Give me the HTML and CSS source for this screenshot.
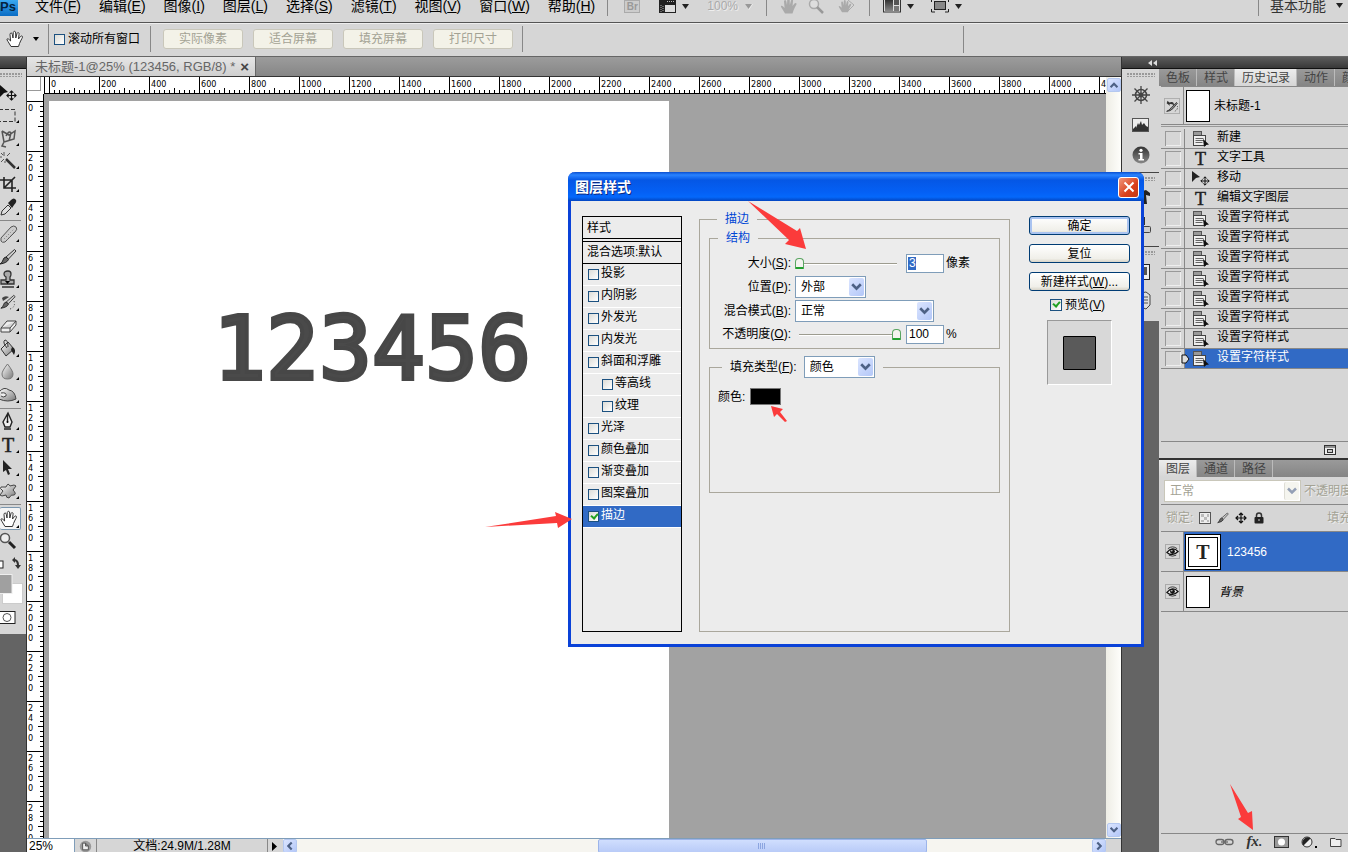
FILE: index.html
```html
<!DOCTYPE html>
<html lang="zh-CN">
<head>
<meta charset="utf-8">
<title>未标题-1 @ 25% (123456, RGB/8) *</title>
<link rel="stylesheet" href="styles.css">
</head>
<body>
<svg class="defs" aria-hidden="true">
  <defs>
    <linearGradient id="gSteel" x1="0" y1="0" x2="1" y2="1"><stop offset="0" stop-color="#fff"/><stop offset="1" stop-color="#777"/></linearGradient>
    <linearGradient id="gDark" x1="0" y1="0" x2="0" y2="1"><stop offset="0" stop-color="#333"/><stop offset="1" stop-color="#888"/></linearGradient>
    <symbol id="hand" viewBox="0 0 18 18"><path d="M5 16.500L2 11.500Q.3 9.500 1.300 8.800Q2.500 8.500 4.600 11L4 4.500Q4 3 5.200 3Q6 3 6.300 4.500L7 8L7.300 2.500Q7.600 1.200 8.700 1.300Q9.700 1.500 9.700 3L9.800 8L11 3.500Q11.500 2.300 12.500 2.700Q13.300 3 13 4.500L12.500 9L14.500 6.500Q15.500 5.500 16.300 6.300Q16.800 7 16 8.300Q14.500 11 13.500 13.500L12.500 16.500Z"/></symbol>
    <symbol id="state" viewBox="0 0 18 16"><rect x="1.500" y=".5" width="8" height="4" fill="#999" stroke="#555"/><rect x="1.500" y="4.500" width="12" height="10" fill="#eee" stroke="#444"/><path d="M3.500 7.500H11.500M3.500 9.500H11.500M3.500 11.500H10.500" stroke="#666"/><path d="M11 8L17 13.500L14 14L12 16Z" fill="#111"/></symbol>
    <symbol id="eye" viewBox="0 0 14 12"><path d="M1 7Q7 0 13 6Q7 12 1 7Z" fill="#eee" stroke="#111" stroke-width="1.300"/><circle cx="7" cy="6" r="2.600" fill="#111"/><path d="M2 3Q7-1 12 3M3 10Q7 12 11 10" fill="none" stroke="#333"/><circle cx="6.300" cy="5.300" r=".8" fill="#fff"/></symbol>
    <symbol id="chev" viewBox="0 0 14 14"><path d="M3 4.500L7 8.500L11 4.500" fill="none" stroke="#4d6185" stroke-width="2.500"/></symbol>
    <symbol id="cross" viewBox="0 0 12 12"><path d="M6 1V11M1 6H11M4 3L6 1L8 3M4 9L6 11L8 9M3 4L1 6L3 8M9 4L11 6L9 8" fill="none" stroke="#111" stroke-width="1.200"/></symbol>
    <symbol id="brush" viewBox="0 0 18 18"><path d="M7 9L15.500 1.500L17 3L9.500 11Z" fill="#ccc" stroke="#333"/><path d="M7 9L9.500 11.500Q8 15 1 16Q3.500 14.500 4 12Q4.500 9.500 7 9Z" fill="#666" stroke="#222"/></symbol>
  </defs>
</svg>

<header class="menubar">
  <span class="logo">Ps</span>
  <nav class="menus">
    <button>文件(<u>F</u>)</button><button>编辑(<u>E</u>)</button><button>图像(<u>I</u>)</button><button>图层(<u>L</u>)</button><button>选择(<u>S</u>)</button><button>滤镜(<u>T</u>)</button><button>视图(<u>V</u>)</button><button>窗口(<u>W</u>)</button><button>帮助(<u>H</u>)</button>
  </nav>
  <div class="appbar">
    <span class="br">Br</span>
    <svg class="gap19" width="32" height="14" viewBox="0 0 32 14"><rect x="1" y="0" width="17" height="13" fill="#222"/><rect x="7" y="5" width="10" height="7" fill="#ddd"/><path d="M3 5V12M5 6V12" stroke="#aaa" stroke-dasharray="1 1"/><path d="M9 1.500H17" stroke="#bbb" stroke-dasharray="1 1"/><path d="M24 4H31L27.500 9Z" fill="#222"/></svg>
    <span class="zoompct gap17">100%</span>
    <svg width="8" height="12" viewBox="0 0 8 12"><path d="M0 4H8L4 10Z" fill="#eee"/><path d="M0 4H7L3.500 9Z" fill="#999"/></svg>
    <i class="vsep"></i>
    <svg width="18" height="14" viewBox="0 3 18 14" fill="#aaa"><use href="#hand" width="18" height="18"/></svg>
    <svg class="gap10" width="18" height="14" viewBox="0 0 18 14"><circle cx="6" cy="4" r="4.500" fill="#ddd" stroke="#aaa" stroke-width="1.500"/><path d="M9 7L15 13" stroke="#999" stroke-width="2.500"/></svg>
    <svg class="gap12" width="18" height="14" viewBox="0 0 18 14"><g transform="translate(0 -1) scale(.8)" fill="#aaa"><use href="#hand" width="18" height="18"/></g><path d="M10 0L16 5L10 11" fill="none" stroke="#aaa"/></svg>
    <i class="vsep"></i>
    <svg width="32" height="14" viewBox="0 0 32 14"><rect x=".5" y="-2" width="17" height="14" fill="#ddd" stroke="#333"/><rect x="2" y="0" width="8" height="11" fill="url(#gDark)"/><rect x="11" y="0" width="5" height="5" fill="#555"/><rect x="11" y="6" width="5" height="5" fill="#777"/><path d="M24 4H31L27.500 9Z" fill="#222"/></svg>
    <svg class="gap16" width="32" height="14" viewBox="0 0 32 14"><rect x="3.500" y="1.500" width="11" height="8" fill="#888" stroke="#222"/><path d="M.5 9V12H4M17.500 9V12H14M.5 2V0M17.500 2V0" fill="none" stroke="#222"/><path d="M24 4H31L27.500 9Z" fill="#222"/></svg>
  </div>
  <button class="workspace">基本功能 <svg width="8" height="10" viewBox="0 0 8 10"><path d="M0 3H7L3.500 8Z" fill="#222"/></svg></button>
</header>

<section class="options">
  <svg class="opt-hand" width="18" height="18" fill="#fff" stroke="#333"><use href="#hand" width="18" height="18"/></svg>
  <svg width="6" height="4" viewBox="0 0 6 4"><path d="M0 0H6L3 4Z"/></svg>
  <label class="scroll-all"><input type="checkbox" class="tick">滚动所有窗口</label>
  <div class="fit-buttons"><button>实际像素</button><button>适合屏幕</button><button>填充屏幕</button><button>打印尺寸</button></div>
  <i class="end-sep"></i>
</section>

<main class="shell">
  <aside class="tools">
    <div class="darkbar"></div>
    <div class="toolbody">
      <div class="grip"></div>
      <button><svg viewBox="0 0 27 23"><path d="M0 4L8 11L4 12L0 16Z" fill="#111"/><use href="#cross" x="6" y="9" width="11" height="11"/></svg></button>
      <button><svg viewBox="0 0 27 23"><rect x="-1" y="5.500" width="16" height="12" fill="none" stroke="#333" stroke-dasharray="4 2"/><path d="M19 16V19H16Z"/></svg></button>
      <button><svg viewBox="0 0 27 23"><path d="M2 4L4 15L14 12L15 4L9 8L2 4M4 15L2 19L6 20M6 9Q9 3 11 6L9 14" fill="none" stroke="#555" stroke-width="1.500"/><path d="M19 16V19H16Z"/></svg></button>
      <button><svg viewBox="0 0 27 23"><path d="M6 9L15 18" stroke="#333" stroke-width="2.500"/><path d="M4 2V6M0 7H2M7 6L10 3M1 3L3 5M1 12L4 9M5 11V13" stroke="#555"/><path d="M19 16V19H16Z"/></svg></button>
      <button><svg viewBox="0 0 27 23"><path d="M4 4V15H16M0 7H12V19M4 15L15 4" fill="none" stroke="#222" stroke-width="1.600"/><path d="M19 16V19H16Z"/></svg></button>
      <button><svg viewBox="0 0 27 23"><path d="M1 19L2 15L8 9L11 12L5 18Z" fill="#ddd" stroke="#333"/><path d="M8 7L11 4Q14 1 16 4Q17 6 14 9L12 12Z" fill="#222"/><path d="M19 16V19H16Z"/></svg></button>
      <hr>
      <button><svg viewBox="0 0 27 23"><path d="M1 15L11 4Q14 2 16 4Q18 6 15 9L5 19Q2 20 1 18Z" fill="#ccc" stroke="#555"/><path d="M4 16L14 6M7 17L14 9" stroke="#777" stroke-dasharray="1 2"/><path d="M19 16V19H16Z"/></svg></button>
      <button><svg viewBox="0 0 27 23"><use href="#brush" x="-1" y="2" width="18" height="18"/><path d="M19 16V19H16Z"/></svg></button>
      <button><svg viewBox="0 0 27 23"><path d="M6 11V8Q4 7 4 5Q4 2 8 2Q11 2 11 5Q11 7 10 8V11H14V15H1V11ZM2 18H14" fill="#aaa" stroke="#333" stroke-width="1.300"/><path d="M5 12H10L7.500 15Z"/><path d="M19 16V19H16Z"/></svg></button>
      <button><svg viewBox="0 0 27 23"><use href="#brush" x="0" y="2" width="16" height="16"/><path d="M2 6Q5 3 9 5L3 9Z" fill="#444"/><path d="M14 9Q16 15 10 17" fill="none" stroke="#333" stroke-dasharray="1 2"/><path d="M19 16V19H16Z"/></svg></button>
      <button><svg viewBox="0 0 27 23"><path d="M1 13L7 6H16L10 13ZM1 13V17H10L16 10V6M10 13V17" fill="#eee" stroke="#444"/><path d="M19 16V19H16Z"/></svg></button>
      <button><svg viewBox="0 0 27 23"><path d="M1 11L8 4L14 11L6 18Z" fill="url(#gSteel)" stroke="#333"/><path d="M7 10Q2 4 5 2Q8 2 8 9" fill="none" stroke="#333"/><path d="M12 9Q17 11 14 17L11 12Z" fill="#222"/><path d="M19 16V19H16Z"/></svg></button>
      <button><svg viewBox="0 0 27 23"><path d="M7.500 3Q2 10 2 13Q2 18 7.500 18Q13 18 13 13Q13 10 7.500 3Z" fill="url(#gSteel)" stroke="#777"/><path d="M19 16V19H16Z"/></svg></button>
      <button><svg viewBox="0 0 27 23"><path d="M-1 8Q4 2 9 6Q15 7 16 15Q8 19-1 15Z" fill="url(#gSteel)" stroke="#444"/><path d="M1 9Q7 8 6 12Q3 14 1 12" fill="#eee" stroke="#444"/><path d="M19 16V19H16Z"/></svg></button>
      <hr>
      <button><svg viewBox="0 0 27 23"><path d="M8 2L12 11L10 16H5L3 11ZM4 18H11M7.500 3V11" fill="#eee" stroke="#222" stroke-width="1.400"/><circle cx="7.500" cy="11" r="1"/><path d="M19 16V19H16Z"/></svg></button>
      <button><svg viewBox="0 0 27 23"><text x="2" y="18" class="serif-t">T</text><path d="M19 16V19H16Z"/></svg></button>
      <button><svg viewBox="0 0 27 23"><path d="M3 3L12 12H8L10 17L8 18L6 13L3 15Z" fill="#222"/><path d="M19 16V19H16Z"/></svg></button>
      <button><svg viewBox="0 0 27 23"><path d="M6 7Q8 2 10 6Q15 4 16 6L13 10Q17 14 14 15Q11 14 9 18Q6 18 6 15Q1 17 0 15L3 11Q-1 8 1 7Z" fill="url(#gSteel)" stroke="#444"/><path d="M19 16V19H16Z"/></svg></button>
      <hr>
      <button class="active"><svg viewBox="0 0 27 23"><g fill="#fff" stroke="#333"><use href="#hand" x="0" y="2" width="18" height="18"/></g><path d="M19 17V20H16Z"/></svg></button>
      <button><svg viewBox="0 0 27 23"><circle cx="5" cy="8" r="4.500" fill="#eee" stroke="#555" stroke-width="1.500"/><path d="M9 12L15 18" stroke="#222" stroke-width="3"/></svg></button>
      <svg class="swatches" width="26" height="81" viewBox="0 0 26 81"><rect x="-4" y="8" width="7" height="7" fill="#fff" stroke="#222"/><path d="M12 7L15 4V6Q19 7 19 12H21L18 16L15 12H17Q17 9 15 8V10Z" fill="#333"/><rect x="2.500" y="30.500" width="20" height="20" fill="#fff" stroke="#ccc"/><rect x="-3" y="21.500" width="15" height="19" fill="#a0a0a0" stroke="#eee"/><rect x="-1" y="58.500" width="16" height="12" fill="#fff" stroke="#222"/><circle cx="7" cy="64.500" r="4" fill="#fff" stroke="#555"/></svg>
    </div>
  </aside>

  <section class="doc">
    <div class="tabbar"><div class="doctab"><span>未标题-1@25% (123456, RGB/8) *</span><button aria-label="关闭">×</button></div></div>
    <div class="view">
      <div class="corner"></div>
      <div class="hruler"><span>0</span><span>200</span><span>400</span><span>600</span><span>800</span><span>1000</span><span>1200</span><span>1400</span><span>1600</span><span>1800</span><span>2000</span><span>2200</span><span>2400</span><span>2600</span><span>2800</span><span>3000</span><span>3200</span><span>3400</span><span>3600</span><span>3800</span><span>4000</span><span>4200</span></div>
      <div class="vscroll"><svg class="sbtn" viewBox="0 0 14 14"><path d="M3 9.500L7 5.500L11 9.500" fill="none" stroke="#4d6185" stroke-width="2.500"/></svg><svg class="sbtn"><use href="#chev"/></svg></div>
      <div class="vruler"><span>0</span><span>200</span><span>400</span><span>600</span><span>800</span><span>1000</span><span>1200</span><span>1400</span><span>1600</span><span>1800</span><span>2000</span><span>2200</span><span>2400</span><span>2600</span><span>2800</span></div>
      <div class="canvas"><div class="page"><p>123456</p></div></div>
    </div>
    <footer class="status">
      <input class="zoombox" value="25%" aria-label="缩放">
      <svg class="stat-ic" width="22" height="14" viewBox="0 0 22 14"><circle cx="11" cy="7.500" r="6" fill="#999"/><path d="M8 4H11L14 7V11H8ZM11 4V7H14" fill="#eee" stroke="#555"/></svg>
      <span class="docinfo">文档:24.9M/1.28M</span>
      <svg class="stat-arrow" width="14" height="14" viewBox="0 0 14 14"><path d="M4 3V12L9 7.500Z"/></svg>
      <div class="hscroll"><svg class="sbtn" viewBox="0 0 14 14"><path d="M9 3L5 7L9 11" fill="none" stroke="#4d6185" stroke-width="2.500"/></svg><div class="track"><i class="lead"></i><i class="thumb"></i><i class="trail"></i></div><svg class="sbtn" viewBox="0 0 14 14"><path d="M5 3L9 7L5 11" fill="none" stroke="#4d6185" stroke-width="2.500"/></svg></div>
    </footer>
  </section>

  <section class="dock">
    <div class="darkbar"><svg width="9" height="6" viewBox="0 0 9 6"><path d="M4 0V6L0 3ZM9 0V6L5 3Z" fill="#ddd"/></svg></div>
    <div class="dockbody">
      <aside class="strip">
        <div class="stripgroup first"><div class="grip"></div>
          <svg width="20" height="20" viewBox="0 0 20 20" fill="none" stroke="#444"><circle cx="10" cy="10" r="5.500" stroke-width="1.500"/><circle cx="10" cy="10" r="2" fill="#444"/><path d="M10 1V19M1 10H19M3.500 3.500L16.500 16.500M16.500 3.500L3.500 16.500" stroke-width="1.300"/></svg>
          <svg width="20" height="16" viewBox="0 0 20 16"><rect x="1.500" y="1.500" width="16" height="13" fill="#eee" stroke="#555"/><path d="M2 12L5 9V11L7 6L8 8L10 4L11 8L13 6L15 9L17 10V14H2Z" fill="#333"/></svg>
          <svg width="20" height="20" viewBox="0 0 20 20"><circle cx="10" cy="10" r="8.500" fill="url(#gDark)"/><path d="M7.500 8H11.500V14H13V15.500H7.500V14H9V9.500H7.500Z" fill="#fff"/><circle cx="10" cy="5.300" r="1.600" fill="#fff"/></svg>
        </div>
        <div class="stripgroup"><div class="grip"></div>
          <svg width="20" height="20" viewBox="0 0 20 20"><path d="M8 5L15 3L19 6V9L15 8L16 17H12L13 8Z" fill="#222"/></svg>
          <svg width="20" height="20" viewBox="0 0 20 20"><path d="M13 0V8" stroke="#333" stroke-width="2"/><rect x="8.500" y="9.500" width="11" height="6" rx="1" fill="#ccc" stroke="#444"/></svg>
        </div>
        <div class="stripgroup last"><div class="grip"></div>
          <svg width="20" height="20" viewBox="0 0 20 20"><rect x="4.500" y="3.500" width="14" height="15" fill="#eee" stroke="#222"/><rect x="8" y="6" width="8" height="8" fill="#555"/></svg>
          <svg width="20" height="20" viewBox="0 0 20 20"><path d="M5 3L15 1L19 4V14L15 18L5 14Z" fill="#ddd" stroke="#444"/><path d="M10 6H17M10 9H17M10 12H17" stroke="#555"/></svg>
        </div>
      </aside>
      <div class="panels">
        <section class="history">
          <div class="tabs"><button>色板</button><button>样式</button><button class="on">历史记录</button><button>动作</button><button>颜色</button></div>
          <div class="snapshot"><div class="cellbox"><svg width="16" height="16" viewBox="0 0 18 18"><rect x=".5" y=".5" width="17" height="17" fill="none" stroke="#aaa"/><path d="M8 11L14 5L15 6L10 12Q7 15 3 15Q6 14 8 11Z" fill="#888" stroke="#333"/><path d="M3 6L4 3L6 5Q12 3 11 9Q10 6 6 7L7 9Z" fill="#333"/><path d="M15 9Q16 13 12 15" fill="none" stroke="#333" stroke-dasharray="1 1"/></svg></div><i class="thumbnail"></i><span>未标题-1</span></div>
          <ul class="states">
            <li><b></b><svg><use href="#state"/></svg><span>新建</span></li>
            <li><b></b><svg viewBox="0 0 18 16"><text x="3" y="14" class="serif-s">T</text></svg><span>文字工具</span></li>
            <li><b></b><svg viewBox="0 0 18 16"><path d="M0 0L8 6L4 7L0 11Z" fill="#222"/><use href="#cross" x="8" y="5" width="10" height="10"/></svg><span>移动</span></li>
            <li><b></b><svg viewBox="0 0 18 16"><text x="3" y="14" class="serif-s">T</text></svg><span>编辑文字图层</span></li>
            <li><b></b><svg><use href="#state"/></svg><span>设置字符样式</span></li>
            <li><b></b><svg><use href="#state"/></svg><span>设置字符样式</span></li>
            <li><b></b><svg><use href="#state"/></svg><span>设置字符样式</span></li>
            <li><b></b><svg><use href="#state"/></svg><span>设置字符样式</span></li>
            <li><b></b><svg><use href="#state"/></svg><span>设置字符样式</span></li>
            <li><b></b><svg><use href="#state"/></svg><span>设置字符样式</span></li>
            <li><b></b><svg><use href="#state"/></svg><span>设置字符样式</span></li>
            <li class="sel"><b></b><svg class="marker" viewBox="0 0 9 10"><path d="M1 1H5L8 5L5 9H1Z" fill="#ddd" stroke="#111"/></svg><svg><use href="#state"/></svg><span>设置字符样式</span></li>
          </ul>
          <footer><svg width="12" height="10" viewBox="0 0 12 10"><rect x=".5" y=".5" width="11" height="9" fill="#eee" stroke="#333"/><path d="M1 2H11" stroke="#333"/><rect x="3.500" y="4.500" width="5" height="3" fill="#ccc" stroke="#333"/></svg></footer>
        </section>
        <section class="layers">
          <div class="tabs"><button class="on">图层</button><button>通道</button><button>路径</button></div>
          <div class="blend"><span class="combo off"><select aria-label="混合模式" disabled><option>正常</option></select><svg><use href="#chev"/></svg></span><span>不透明度:</span></div>
          <div class="lock"><span>锁定:</span>
            <svg width="12" height="12" viewBox="0 0 12 12"><rect x=".5" y=".5" width="11" height="11" fill="#eee" stroke="#555"/><path d="M2 2H5V5H2ZM8 2H10V5H8ZM5 5H8V8H5ZM2 8H5V10H2ZM8 8H10V10H8Z" fill="#bbb"/></svg>
            <svg width="12" height="12"><use href="#brush"/></svg>
            <svg width="12" height="12"><use href="#cross"/></svg>
            <svg width="12" height="12" viewBox="0 0 12 12"><path d="M3.500 6V3.500Q3.500 1 6 1Q8.500 1 8.500 3.500V6" fill="none" stroke="#333" stroke-width="1.500"/><rect x="1.500" y="5" width="9" height="6.500" rx="1" fill="#222"/><path d="M6 7V9" stroke="#ccc"/></svg>
            <span class="fill">填充:</span></div>
          <div class="layer sel"><div class="eye"><svg><use href="#eye"/></svg></div><i class="textthumb">T</i><span>123456</span></div>
          <div class="layer"><div class="eye"><svg><use href="#eye"/></svg></div><i class="thumbnail"></i><em>背景</em></div>
          <div class="blank"></div>
          <footer>
            <svg width="19" height="12" viewBox="0 0 19 12" fill="none" stroke="#666" stroke-width="1.300"><rect x="1" y="3.500" width="8" height="5" rx="2.500"/><rect x="10" y="3.500" width="8" height="5" rx="2.500"/><path d="M6 6H13"/></svg>
            <span class="fx">fx<small>.</small></span>
            <svg width="15" height="12" viewBox="0 0 15 12"><rect x=".5" y=".5" width="14" height="11" fill="#999" stroke="#333"/><circle cx="7.500" cy="6" r="3.500" fill="#fff"/></svg>
            <svg width="17" height="12" viewBox="0 0 17 12"><circle cx="6" cy="6" r="5" fill="#eee" stroke="#333"/><path d="M2.500 9.500A5 5 0 0 1 9.500 2.500Z" fill="#222"/><rect x="14" y="10" width="2" height="2"/></svg>
            <svg width="12" height="12" viewBox="0 0 12 12"><path d="M.5 2.500H5L6 3.500H11V10.500H.5Z" fill="#eee" stroke="#444"/></svg>
          </footer>
        </section>
      </div>
    </div>
  </section>
</main>

<div class="dialog" role="dialog" aria-label="图层样式">
  <header><h1>图层样式</h1><button aria-label="关闭"><svg width="12" height="12" viewBox="0 0 12 12"><path d="M1.500 1.500L10.500 10.500M10.500 1.500L1.500 10.500" stroke="#fff" stroke-width="2"/></svg></button></header>
  <div class="dlgbody">
    <div class="effects">
      <h2>样式</h2>
      <h3>混合选项:默认</h3>
      <label><input type="checkbox" class="tick">投影</label>
      <label><input type="checkbox" class="tick">内阴影</label>
      <label><input type="checkbox" class="tick">外发光</label>
      <label><input type="checkbox" class="tick">内发光</label>
      <label><input type="checkbox" class="tick">斜面和浮雕</label>
      <label class="sub"><input type="checkbox" class="tick">等高线</label>
      <label class="sub"><input type="checkbox" class="tick">纹理</label>
      <label><input type="checkbox" class="tick">光泽</label>
      <label><input type="checkbox" class="tick">颜色叠加</label>
      <label><input type="checkbox" class="tick">渐变叠加</label>
      <label><input type="checkbox" class="tick">图案叠加</label>
      <label class="sel"><input type="checkbox" class="tick" checked>描边</label>
    </div>
    <fieldset class="stroke"><legend>描边</legend>
      <fieldset class="structure"><legend>结构</legend>
        <div class="row"><label for="size">大小(<u>S</u>):</label><input type="range" min="0" max="250" value="0" aria-label="大小"><input class="num" id="size" value="3"><span class="unit">像素</span></div>
        <div class="row"><label for="pos">位置(<u>P</u>):</label><span class="combo w71"><select id="pos"><option>外部</option></select><svg><use href="#chev"/></svg></span></div>
        <div class="row"><label for="mode">混合模式(<u>B</u>):</label><span class="combo w139"><select id="mode"><option>正常</option></select><svg><use href="#chev"/></svg></span></div>
        <div class="row"><label for="opac">不透明度(<u>O</u>):</label><input type="range" min="0" max="100" value="100" aria-label="不透明度"><input class="num" id="opac" value="100"><span class="unit">%</span></div>
      </fieldset>
      <fieldset class="filltype"><legend><label for="fill">填充类型(<u>F</u>):</label><span class="combo w71"><select id="fill"><option>颜色</option></select><svg><use href="#chev"/></svg></span></legend>
        <div class="colour"><label for="swatch">颜色:</label><button id="swatch" aria-label="颜色"></button></div>
      </fieldset>
    </fieldset>
    <div class="actions">
      <button class="default">确定</button><button>复位</button><button>新建样式(<u>W</u>)...</button>
      <label><input type="checkbox" class="tick" checked><span>预览(<u>V</u>)</span></label>
      <div class="preview"><i></i></div>
    </div>
  </div>
</div>

<svg class="arrows" width="1348" height="852" viewBox="0 0 1348 852" fill="#fb3b3b" aria-hidden="true">
  <path d="M748 201L797 231L800 228L806 249L785 244L789 240Z"/>
  <path d="M485 527L556 516L555 512L572 519L558 528L557 523Z"/>
  <path d="M771 406L783 409L780 412L787 421L785 422L777 414L774 417Z"/>
  <path d="M1230 784L1248 813L1252 811L1253 830L1238 819L1241 817Z"/>
</svg>
</body>
</html>
```

FILE: styles.css
```css
* { box-sizing: border-box; }
body {
  margin: 0;
  height: 100vh;
  overflow: hidden;
  position: relative;
  display: flex;
  flex-direction: column;
  background: #646464;
  color: #000;
  font: 12px/16px "Liberation Sans", "Noto Sans CJK SC", sans-serif;
}
button, input, select { font: inherit; color: inherit; padding: 0; border: 0; background: none; }
p, h1, h2, h3, ul { margin: 0; padding: 0; font: inherit; }
svg { flex: none; display: block; }
.defs { position: absolute; width: 0; height: 0; }
.arrows { position: absolute; left: 0; top: 0; pointer-events: none; }

/* menu bar */
.menubar {
  flex: none;
  height: 23px;
  display: flex;
  align-items: flex-start;
  background: #d6d6d6;
  border-bottom: 1px solid #555;
  font-size: 14px;
  line-height: 13px;
  white-space: nowrap;
}
.logo {
  width: 18px;
  height: 16px;
  background: linear-gradient(#3aa8f0, #0a6cc4);
  color: #04233f;
  font-weight: bold;
  font-size: 13px;
  line-height: 13px;
}
.menus { display: flex; gap: 18px; padding-left: 17px; }
.appbar { display: flex; align-items: flex-start; margin-left: 12px; padding-left: 16px; border-left: 1px solid #888; height: 16px; }
.br { width: 16px; height: 13px; border: 1px solid #aaa; background: #ccc; color: #999; font-size: 10px; font-weight: bold; line-height: 12px; text-align: center; }
.gap19 { margin-left: 18px; }
.gap17 { margin-left: 17px; }
.gap16 { margin-left: 16px; }
.gap10 { margin-left: 10px; }
.gap12 { margin-left: 12px; }
.zoompct { width: 38px; color: #aaa; font-size: 12px; text-shadow: 1px 1px #eee; }
.vsep { width: 1px; height: 16px; background: #888; margin: 0 13px; }
.workspace { margin-left: auto; padding: 0 4px 3px 11px; border-left: 1px solid #888; color: #333; display: flex; gap: 10px; line-height: 13px; }

/* options bar */
.options {
  flex: none;
  height: 34px;
  display: flex;
  align-items: center;
  padding: 0 0 2px 6px;
  background: #d6d6d6;
  border-top: 1px solid #eee;
  border-bottom: 1px solid #666;
}
.opt-hand { margin-right: 9px; }
.scroll-all { display: flex; align-items: center; gap: 3px; height: 30px; margin-left: 9px; padding-left: 5px; border-left: 1px solid #888; }
.fit-buttons { display: flex; gap: 10px; margin-left: 10px; padding: 3px 9px 3px 12px; border: solid #888; border-width: 0 1px; }
.fit-buttons button { width: 80px; height: 20px; background: #f3f2e8; border: 1px solid #c9c7ba; border-radius: 3px; color: #a3a294; }
.end-sep { width: 1px; height: 27px; margin-left: 440px; background: #888; }
.tick {
  appearance: none;
  flex: none;
  width: 11px;
  height: 11px;
  margin: 0;
  border: 1px solid #1c5180;
  background: linear-gradient(135deg, #dcdcd7, #fff);
}
.tick:checked::after { content: ""; display: block; width: 3px; height: 5px; margin: 0 0 0 3px; border: solid #21a121; border-width: 0 2px 2px 0; transform: rotate(40deg); }

/* shell */
.shell { flex: 1; min-height: 0; display: flex; }
.darkbar { height: 12px; background: linear-gradient(#5c5c5c, #383838); border-bottom: 1px solid #111; }
.grip { height: 4px; background: radial-gradient(circle at 1px 1px, #999 1px, transparent 1px) 0 0 / 3px 3px; }
.tools { flex: none; width: 27px; border-right: 1px solid #333; }
.toolbody { background: #d6d6d6; padding-top: 4px; }
.toolbody .grip { margin: 0 4px 4px 0; }
.toolbody button { display: block; width: 26px; height: 23px; }
.toolbody button svg { width: 27px; height: 23px; }
.toolbody button.active { width: 21px; background: #f4f4f4; border: solid #7a96ae; border-width: 1px 1px 1px 0; border-radius: 2px; overflow: hidden; }
.toolbody hr { margin: 1px 5px 2px 0; border: 0; height: 1px; background: #888; }
.serif-t { font: 20px "Liberation Serif", serif; fill: #222; stroke: #222; stroke-width: 0.5; }
.serif-s { font: 18px "Liberation Serif", serif; fill: #222; stroke: #222; stroke-width: 0.5; }

/* document */
.doc { flex: 1; min-width: 0; display: flex; flex-direction: column; border-right: 1px solid #333; }
.tabbar { flex: none; height: 20px; display: flex; background: linear-gradient(#9c9c9c, #868686); border-bottom: 1px solid #333; }
.doctab { width: 229px; padding: 0 6px 0 8px; display: flex; justify-content: space-between; align-items: center; background: linear-gradient(#e6e6e6, #cfcfcf); border-right: 1px solid #666; color: #666; font-size: 13px; white-space: nowrap; }
.doctab button { font: bold 15px/16px "Liberation Sans", sans-serif; color: #444; }
.view { flex: 1; min-height: 0; display: grid; grid-template: 17px minmax(0, 1fr) / 17px minmax(0, 1fr) 15px; }
.corner { margin: 0 0 0 0; background: #fff; border: 4px solid #fff; border-width: 0 3px 3px 0; box-shadow: inset -1px -1px #999; }
.hruler, .vruler { display: flex; overflow: hidden; background-color: #fff; font: 9px/10px "DejaVu Sans Condensed", "DejaVu Sans", sans-serif; }
.hruler { padding-left: 4px; border-bottom: 1px solid #000; border-left: 1px solid #000; }
.hruler span {
  flex: none;
  width: 50px;
  padding: 2px 0 0 2px;
  background:
    linear-gradient(90deg, #000 1px, transparent 1px) 0 0 / 50px 100% no-repeat,
    linear-gradient(90deg, #000 1px, transparent 1px) 25px 100% / 25px 5px no-repeat,
    linear-gradient(90deg, #000 1px, transparent 1px) 0 100% / 5px 3px repeat-x;
}
.vruler { grid-column: 1; grid-row: 2; flex-direction: column; padding-top: 7px; border-right: 1px solid #000; }
.vruler span {
  flex: none;
  height: 50px;
  padding: 2px 9px 0 1px;
  word-break: break-all;
  background:
    linear-gradient(#000 1px, transparent 1px) 0 0 / 100% 50px no-repeat,
    linear-gradient(#000 1px, transparent 1px) 100% 25px / 5px 25px no-repeat,
    linear-gradient(#000 1px, transparent 1px) 100% 0 / 3px 5px repeat-y;
}
.canvas { grid-column: 2; grid-row: 2; background: #a2a2a2; padding: 7px 0 0 5px; }
.page { width: 620px; height: 100%; background: #fff; padding: 198px 0 0 164px; }
.page p { font: 88px/100px "DejaVu Sans Mono", monospace; color: #4a4a4a; -webkit-text-stroke: 4px #474747; }
.vscroll { grid-column: 3; grid-row: 1 / 3; display: flex; flex-direction: column; justify-content: space-between; align-items: center; padding: 1px 0; background: linear-gradient(90deg, #eeede5, #fefefb); }
.sbtn { width: 14px; height: 14px; background: linear-gradient(135deg, #dbe5ff, #b3c7f8); border: 1px solid #b4c8f0; border-radius: 2px; }
.status { flex: none; height: 14px; display: flex; background: #d6d6d6; border-top: 1px solid #7f9db9; overflow: hidden; line-height: 15px; }
.zoombox { width: 48px; height: 15px; padding-left: 2px; background: #fff; border-right: 1px solid #7f9db9; }
.stat-ic { border-right: 1px solid #888; }
.docinfo { width: 171px; text-align: center; border-right: 1px solid #888; }
.hscroll { flex: 1; display: flex; margin: 0 15px 0 1px; background: #f6f5f0; }
.track { flex: 1; display: flex; }
.lead { flex: 301 1 0; }
.thumb { flex: 328 1 0; height: 14px; border: 1px solid #9cb4ea; border-radius: 2px; background: repeating-linear-gradient(90deg, #8ca5e0 0 1px, transparent 1px 2px) center / 8px 6px no-repeat, linear-gradient(#d0defe, #b9cbf8); }
.trail { flex: 165 1 0; }

/* dock */
.dock { flex: none; width: 226px; display: flex; flex-direction: column; overflow: hidden; }
.dock > .darkbar { flex: none; padding: 3px 0 0 26px; }
.dockbody { flex: 1; min-height: 0; display: flex; }
.strip { flex: none; width: 37px; }
.stripgroup { display: flex; flex-direction: column; align-items: center; gap: 10px; height: 74px; padding-top: 4px; background: #d6d6d6; border-bottom: 1px solid #444; }
.stripgroup.first { height: 104px; gap: 12px; }
.stripgroup.last { border-bottom: 0; }
.stripgroup .grip { width: 28px; margin-bottom: -4px; }
.panels { flex: 1; min-width: 0; display: flex; flex-direction: column; white-space: nowrap; }
.history { flex: none; height: 391px; display: flex; flex-direction: column; background: #d6d6d6; border-bottom: 2px solid #333; }
.layers { flex: 1; display: flex; flex-direction: column; background: #d6d6d6; min-height: 0; }
.tabs { flex: none; height: 17px; display: flex; overflow: hidden; background: linear-gradient(#9a9a9a, #858585); }
.tabs button { flex: none; padding: 0 6px 0 7px; border-right: 1px solid #bbb; color: #444; line-height: 16px; }
.tabs button.on { background: linear-gradient(#ececec, #d6d6d6); }
.snapshot { flex: none; height: 39px; margin-left: 2px; border-top: 1px solid #888; border-bottom: 1px solid #888; display: flex; align-items: center; }
.cellbox { width: 23px; align-self: stretch; display: flex; justify-content: center; align-items: center; border-right: 1px solid #888; }
.thumbnail { flex: none; width: 24px; height: 32px; margin: 0 4px 0 2px; background: #fff; border: 1px solid #000; }
.states { list-style: none; margin-left: 2px; padding-top: 2px; border-top: 1px solid #999; margin-top: 1px; flex: 1; }
.states li { height: 20px; display: flex; align-items: center; border-bottom: 1px solid #888; }
.states b { align-self: stretch; width: 23px; border: solid #d6d6d6; border-width: 2px 3px 2px 4px; background: #d6d6d6; box-shadow: inset 1px 1px #999, inset -1px -1px #eee, 1px 0 #888; }
.states svg { width: 18px; height: 16px; margin: 0 7px 0 8px; }
.states li > span { line-height: 17px; padding-bottom: 2px; }
.states .sel { background: #316ac5; color: #fff; }
.states .marker { width: 9px; height: 10px; margin: 0 -6px 0 -3px; position: relative; }
.states .marker + svg { margin-left: 8px; }
.history footer { flex: none; height: 17px; margin-left: 2px; border-top: 1px solid #888; display: flex; align-items: center; justify-content: flex-end; padding-right: 12px; }
.combo { flex: none; display: flex; align-items: center; height: 22px; background: #fff; border: 1px solid #7f9db9; }
.combo select { flex: 1; min-width: 0; height: 20px; appearance: none; padding-left: 5px; }
.combo svg { width: 15px; height: 18px; margin-right: 1px; background: linear-gradient(135deg, #dbe5ff, #b3c7f8); border-radius: 2px; }
.combo.off { width: 137px; border-color: #c9c7ba; color: #a3a294; }
.combo.off select { opacity: 1; color: #a3a294; }
.combo.off svg { background: #f0efe6; opacity: 0.6; border-left: 1px solid #c9c7ba; }
.blend { flex: none; height: 28px; margin-left: 2px; display: flex; align-items: center; gap: 3px; padding-left: 3px; border-bottom: 1px solid #888; color: #a3a294; text-shadow: 1px 1px #eee; }
.lock { flex: none; height: 27px; margin-left: 2px; padding-left: 5px; display: flex; align-items: center; gap: 6px; border-bottom: 1px solid #888; color: #a3a294; text-shadow: 1px 1px #eee; }
.lock span:first-child { width: 28px; }
.fill { margin-left: 56px; }
.layer { flex: none; height: 40px; margin-left: 2px; display: flex; align-items: center; border-bottom: 1px solid #888; }
.layer.sel { background: #316ac5; color: #fff; }
.eye { width: 23px; align-self: stretch; display: grid; place-items: center; background: #d6d6d6; border-right: 1px solid #888; }
.eye svg { width: 15px; height: 15px; border: 1px solid #aaa; }
.textthumb { width: 36px; height: 36px; margin: 0 6px 0 1px; border: 1px solid #000; background: #fff; outline: 1px solid #000; outline-offset: -4px; color: #222; font: bold 20px/34px "Liberation Serif", serif; text-align: center; }
.layer em { margin-left: 5px; }
.blank { flex: 1; }
.layers footer { flex: none; height: 19px; margin-left: 2px; padding: 2px 6px 0; border-top: 1px solid #888; display: flex; justify-content: flex-end; gap: 12px; }
.fx { font: italic bold 15px/10px "Liberation Serif", serif; color: #333; }

/* layer style dialog */
.dialog {
  position: absolute;
  left: 568px;
  top: 172px;
  width: 576px;
  border: solid #0a42d8;
  border-width: 0 3px 3px;
  border-radius: 7px 7px 0 0;
  background: #ececec;
}
.dialog > header {
  height: 29px;
  margin: 0 -3px;
  padding: 1px 5px 0 7px;
  display: flex;
  justify-content: space-between;
  align-items: center;
  border-radius: 7px 7px 0 0;
  background: linear-gradient(#0a4fd0, #2a83ff 3px, #0557e5 8px, #0460f5 20px, #0468fb 25px, #0345c0);
}
.dialog h1 { color: #fff; font: bold 14px/20px "Liberation Sans", "Noto Sans CJK SC", sans-serif; text-shadow: 1px 1px #0b2a80; }
.dialog header button { width: 21px; height: 21px; display: grid; place-items: center; border: 1px solid #fff; border-radius: 3px; background: linear-gradient(135deg, #f0977c, #d9401b 60%, #c03a18); }
.dlgbody { display: flex; padding: 10px 11px 12px; }
.effects { flex: none; width: 100px; height: 416px; margin-top: 5px; border: 1px solid #000; }
.effects h2 { height: 25px; padding-left: 4px; line-height: 22px; border-bottom: 4px double #000; }
.effects h3 { height: 22px; padding-left: 4px; line-height: 21px; border-bottom: 1px solid #000; }
.effects label { height: 22px; display: flex; align-items: center; gap: 2px; padding: 0 0 3px 5px; border-bottom: 1px solid #fff; }
.effects .tick { margin-top: 3px; }
.effects .sub { padding-left: 19px; }
.effects .sel { background: #316ac5; color: #fff; }
fieldset { min-width: 0; margin: 0; padding: 0; border: 1px solid #aaa79c; }
legend { padding: 0 8px; line-height: 16px; color: #0046d5; }
.stroke { width: 311px; height: 421px; margin-left: 17px; padding: 3px 9px 0; }
.stroke > legend, .structure > legend { margin-left: 8px; }
.structure { padding: 5px 0 3px; }
.row { height: 24px; display: flex; align-items: center; }
.row:last-child { height: 22px; }
.row > label { width: 81px; margin-right: 4px; text-align: right; white-space: nowrap; }
.row input[type="range"] { appearance: none; width: 106px; height: 16px; margin: 0 5px 0 0; background: linear-gradient(#9d9c8f 1px, #fff 1px 2px, transparent 2px) 4px 8px / 98px 3px no-repeat; }
.row input[type="range"]::-webkit-slider-thumb { appearance: none; width: 9px; height: 11px; background: #f3f3ef; border: 1px solid #5aa562; border-bottom: 2px solid #21a12f; border-radius: 4px 4px 1px 1px; }
.num { width: 38px; height: 19px; padding-left: 2px; background: #fff; border: 1px solid #7f9db9; }
#size { background: linear-gradient(#316ac5, #316ac5) 1px 2px / 8px 13px no-repeat #fff; color: #fff; }
.unit { margin-left: 2px; }
.w71 { width: 71px; }
.w139 { width: 139px; }
.filltype { height: 137px; margin-top: 7px; }
.filltype legend { display: flex; align-items: center; gap: 7px; margin-left: 12px; color: #000; }
.colour { display: flex; align-items: center; gap: 5px; margin-top: 10px; padding-left: 8px; }
.colour button { width: 31px; height: 17px; background: #000; border: 1px solid #777; }
.actions { width: 101px; margin: 5px 0 0 19px; display: flex; flex-direction: column; align-items: center; gap: 9px; }
.actions button { width: 101px; height: 19px; border: 1px solid #003c74; border-radius: 3px; background: linear-gradient(#fff, #f0efe9 80%, #d8d4c8); }
.actions .default { box-shadow: inset 0 0 0 2px #a9c3f0; }
.actions label { display: flex; align-items: center; gap: 3px; height: 12px; margin: -1px 4px 0 0; }
.actions .tick { width: 12px; height: 12px; }
.preview { width: 65px; height: 65px; display: grid; place-items: center; background: #d8d8d8; border: 1px solid; border-color: #999 #fff #fff #999; }
.preview i { width: 33px; height: 34px; background: #5a5a5a; border: 1px solid #000; border-radius: 1px; }
```
